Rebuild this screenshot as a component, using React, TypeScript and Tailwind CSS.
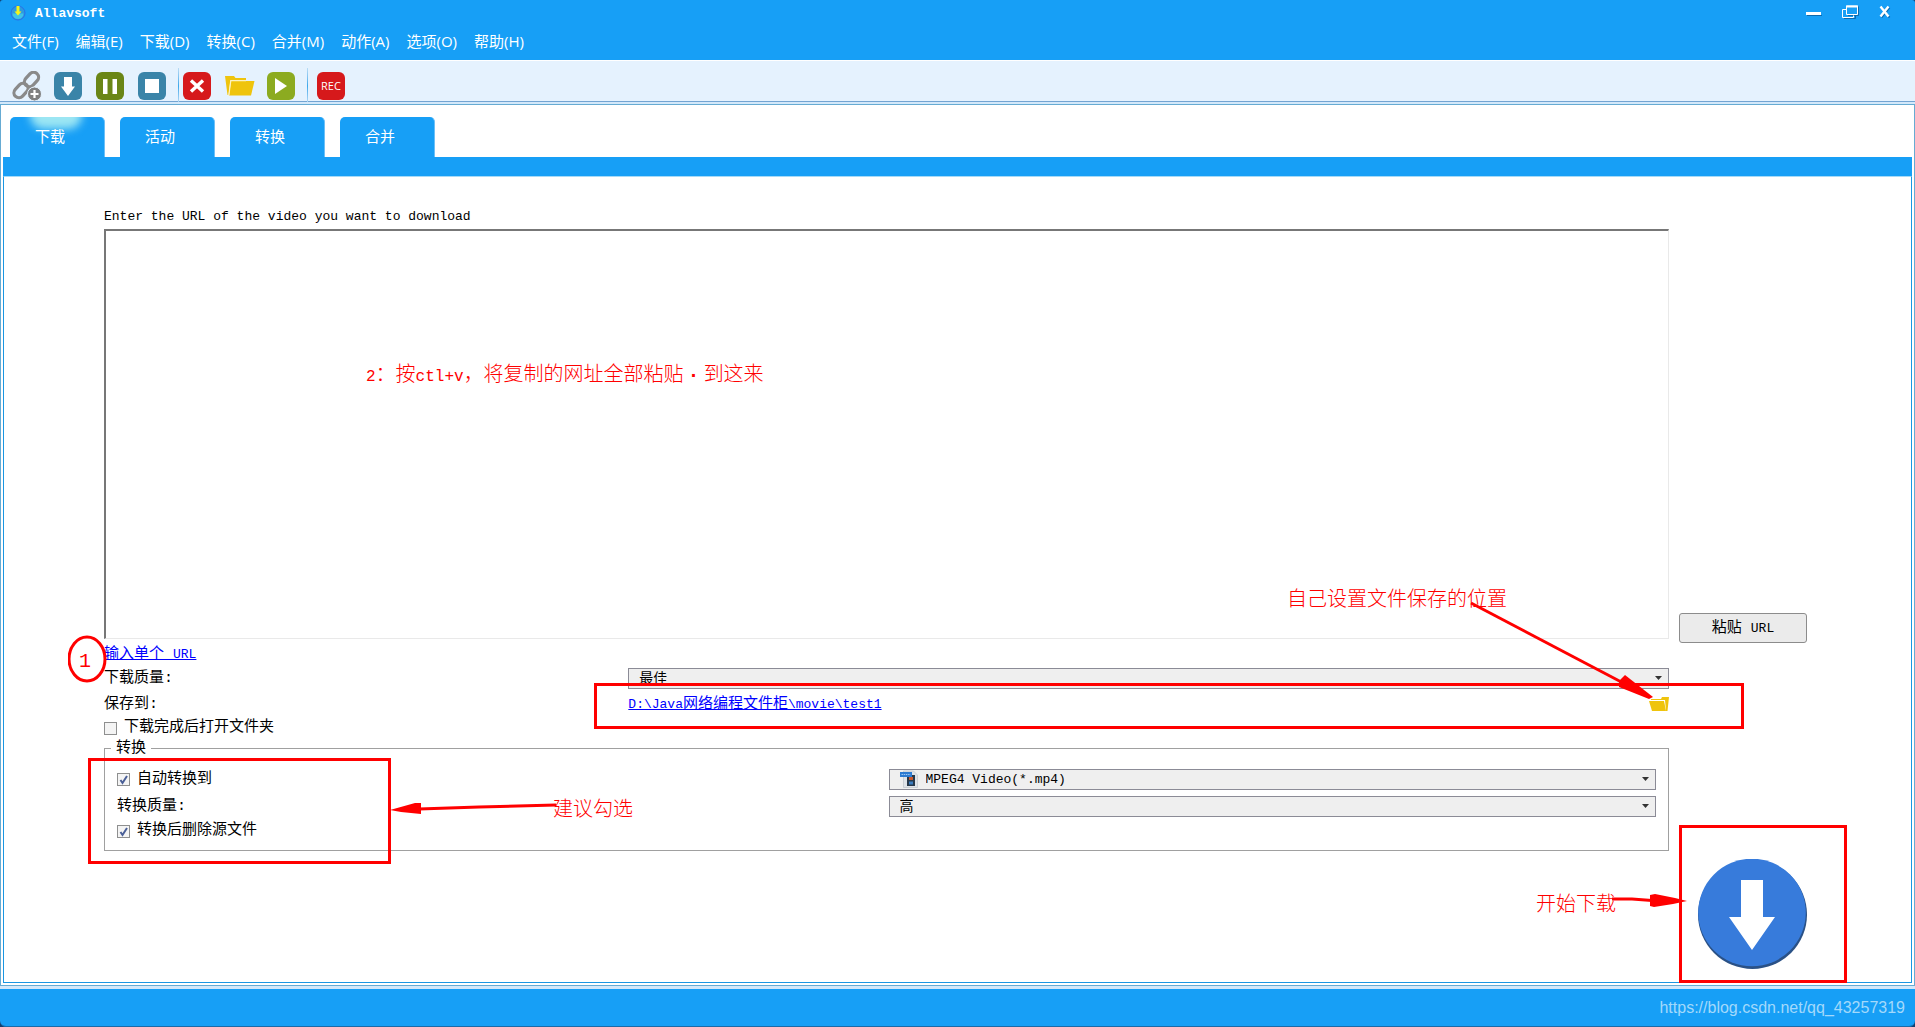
import React, { useState } from "react";

const MENU = ["文件(F)", "编辑(E)", "下载(D)", "转换(C)", "合并(M)", "动作(A)", "选项(O)", "帮助(H)"];
const TABS = ["下载", "活动", "转换", "合并"];

function AppIcon() {
  return (
    <svg width="16" height="16" viewBox="0 0 16 16" aria-hidden="true">
      <circle cx="8" cy="8" r="7" fill="#2c9be0" stroke="#2a6fe8" />
      <path d="M2.5 8.5a5.5 5.5 0 0 0 11 0z" fill="#3fc3e8" />
      <path d="M6.5 1h3v5.500h2L8 10.500 4.500 6.500h2z" fill="#f4f41c" />
    </svg>
  );
}

function LinkAddIcon() {
  return (
    <svg width="30" height="30" viewBox="0 0 30 30" fill="none" aria-hidden="true">
      <g stroke="#8a8a8a" strokeWidth="3.200">
        <rect x="-8" y="-5" width="16" height="10" rx="5" transform="translate(19.500 8.500) rotate(-47)" />
        <rect x="-8" y="-5" width="16" height="10" rx="5" transform="translate(9 19.500) rotate(-47)" />
      </g>
      <circle cx="22.500" cy="23" r="7" fill="#808080" stroke="#e5f2fe" />
      <path d="M22.500 19v8M18.500 23h8" stroke="#fff" strokeWidth="2.2" />
    </svg>
  );
}

function FolderIcon() {
  return (
    <svg width="30" height="22" viewBox="0 0 30 22" aria-hidden="true">
      <path d="M0 1h9l1.500 2H21v2H5.500L3.500 20H2.500z" fill="#efc40d" />
      <path d="M6 6h23.500L26 20.500H4z" fill="#efc40d" />
      <path d="M3.800 20.500L5.800 5.700H21" fill="none" stroke="#fdf3c2" strokeWidth="1.200" />
    </svg>
  );
}

function SmallFolderIcon() {
  return (
    <svg width="20" height="15" viewBox="0 0 20 15" aria-hidden="true">
      <path d="M13 0h7l-1.500 14H17L16 3H2V2h10z" fill="#efc40d" />
      <path d="M0 4h15l2 10H3z" fill="#efc40d" />
    </svg>
  );
}

function Mp4Icon() {
  return (
    <svg width="18" height="18" viewBox="0 0 18 18" aria-hidden="true">
      <path d="M3.500 1h10l4 4v12.500h-14z" fill="#dfe3e8" stroke="#c3c8ce" strokeWidth=".8" />
      <path d="M7 5h8v11H7z" fill="#26384a" />
      <path d="M9 7h4v3H9z" fill="#c8592e" />
      <path d="M9 11.500h4v3H9z" fill="#3a7cc0" />
      <path d="M0 2h12v5H0z" fill="#2d7bd2" />
      <path d="M1.500 4.500h9" stroke="#9cc6f2" strokeDasharray="1.500 .7" />
    </svg>
  );
}

function ToolButton({ label, className, children }: { label: string; className: string; children: React.ReactNode }) {
  return (
    <button
      type="button"
      aria-label={label}
      className={`flex size-7 items-center justify-center rounded-md ${className}`}
    >
      {children}
    </button>
  );
}

function Divider() {
  return <span className="h-9 w-px bg-linear-to-b from-[#b9dcf5] via-[#3aa8ea] to-[#b9dcf5]" />;
}

function Combo({ id, value, label, icon }: { id: string; value: string; label?: string; icon?: React.ReactNode }) {
  return (
    <div className="relative h-[21px]">
      {icon && <span className="absolute left-[11px] top-px">{icon}</span>}
      <select
        id={id}
        aria-label={label}
        className={`block h-full w-full appearance-none border border-[#8b8b96] bg-[#efefef] ${
          icon ? "pl-9 text-[13px]" : "pl-2.5 text-sm"
        }`}
      >
        <option>{value}</option>
      </select>
      <svg className="pointer-events-none absolute right-[7px] top-2" width="7" height="4" viewBox="0 0 7 4" aria-hidden="true">
        <path d="M0 0h7L3.500 4z" fill="#333" />
      </svg>
    </div>
  );
}

function CheckRow({ id, label, checked = false }: { id: string; label: string; checked?: boolean }) {
  const [on, setOn] = useState(checked);
  return (
    <div className="flex items-center">
      <span className="relative size-[13px]">
        <input
          id={id}
          type="checkbox"
          checked={on}
          onChange={() => setOn(!on)}
          className="block size-[13px] appearance-none border border-[#8e8f8f] bg-[#f4f4f4]"
        />
        {on && (
          <svg className="pointer-events-none absolute left-0 top-0" width="13" height="13" viewBox="0 0 13 13" aria-hidden="true">
            <path d="M3.500 7l2 3L10 3" fill="none" stroke="#4a5f97" strokeWidth="2" />
          </svg>
        )}
      </span>
      <label htmlFor={id} className="pl-[7px]">
        {label}
      </label>
    </div>
  );
}

// red handwritten-style hints that lie over the form
const NOTE = "pointer-events-none absolute whitespace-nowrap text-xl leading-6 font-light text-[#ff0000]";
const FRAME = "pointer-events-none absolute border-3 border-[#ff0000]";

export default function App() {
  const [tab, setTab] = useState(0);

  return (
    <div className="flex min-h-screen flex-col bg-[#123f70] font-['Liberation_Mono','Noto_Sans_CJK_SC',monospace] text-[15px] leading-5 text-black">
      {/* Title bar and menu */}
      <header className="rounded-t-[3px] bg-[#179ff6] text-white">
        <div className="flex h-[25px] items-center justify-between pl-[10px] pr-6">
          <div className="flex items-center gap-[9px]">
            <AppIcon />
            <h1 className="pt-0.5 text-[13px] font-bold">Allavsoft</h1>
          </div>
          <div className="flex items-center gap-5 pb-0.5">
            <button type="button" aria-label="最小化">
              <svg width="16" height="14" viewBox="0 0 16 14" aria-hidden="true">
                <path d="M0 8.500h15" stroke="#fff" strokeWidth="3" />
                <path d="M1 10.500h15" stroke="#0c69ad" />
              </svg>
            </button>
            <button type="button" aria-label="还原">
              <svg width="17" height="14" viewBox="0 0 17 14" fill="none" aria-hidden="true">
                <path d="M2 13.500h11.500v-3M6 10.500h10.500v-9" stroke="#0c69ad" />
                <path d="M4 4.500H.500v8h11v-2" stroke="#fff" />
                <path d="M4.500 1h11v8.500h-11z" stroke="#fff" />
                <path d="M4 1.500h12" stroke="#fff" strokeWidth="2" />
              </svg>
            </button>
            <button type="button" aria-label="关闭">
              <svg width="12" height="14" viewBox="0 0 12 14" fill="none" aria-hidden="true">
                <path d="M2.500 2.500l8 10M10.500 2.500l-8 10" stroke="#0c69ad" strokeWidth="2" />
                <path d="M1.500 1.500l8 10M9.500 1.500l-8 10" stroke="#fff" strokeWidth="2.4" />
              </svg>
            </button>
          </div>
        </div>
        <nav className="flex h-[35px] items-center gap-[17px] px-3 pb-1 font-['Open_Sans','Noto_Sans_CJK_SC',sans-serif]">
          {MENU.map((item) => (
            <button key={item} type="button">
              {item}
            </button>
          ))}
        </nav>
      </header>

      {/* Toolbar */}
      <div className="flex h-[42px] items-center border-b border-t border-b-[#73a4d2] border-t-white bg-[#e5f2fe] pl-3 pt-[10px]">
        <button type="button" aria-label="添加链接" className="w-[42px]">
          <LinkAddIcon />
        </button>
        <div className="flex items-center gap-[14px]">
          <ToolButton label="开始" className="bg-[#3a84a8]">
            <svg width="14" height="19" viewBox="0 0 14 19" aria-hidden="true">
              <path d="M3 0h8v9.500h3L7 19 0 9.500h3z" fill="#fff" />
            </svg>
          </ToolButton>
          <ToolButton label="暂停" className="bg-[#6a8616]">
            <svg width="14" height="15" viewBox="0 0 14 15" aria-hidden="true">
              <path d="M0 0h4.500v15H0zM9.500 0H14v15H9.500z" fill="#fff" />
            </svg>
          </ToolButton>
          <ToolButton label="停止" className="bg-[#3a84a8]">
            <span className="size-[14px] bg-white" />
          </ToolButton>
        </div>
        <div className="flex items-center gap-1 pl-3">
          <Divider />
          <ToolButton label="删除" className="bg-[#d6191b]">
            <svg width="16" height="14" viewBox="0 0 16 14" aria-hidden="true">
              <path d="M2 1.500l12 11M14 1.500l-12 11" stroke="#fff" strokeWidth="3.400" />
            </svg>
          </ToolButton>
        </div>
        <button type="button" aria-label="打开文件夹" className="pl-[14px] pr-3">
          <FolderIcon />
        </button>
        <ToolButton label="播放" className="bg-[#8cab20]">
          <svg width="12" height="16" viewBox="0 0 12 16" aria-hidden="true">
            <path d="M0 0l12 8-12 8z" fill="#fff" />
          </svg>
        </ToolButton>
        <div className="flex items-center gap-[9px] pl-3">
          <Divider />
          <ToolButton label="录制" className="bg-[#d6191b] font-['Open_Sans',sans-serif] text-[11px] text-white">
            REC
          </ToolButton>
        </div>
      </div>

      {/* Main window area */}
      <div className="flex flex-1 flex-col bg-[#d3e8fa] pb-[3px] pt-[2px]">
        <div className="flex flex-1 flex-col border border-[#66abd3] bg-white px-[2px] pb-[2px] pt-3">
          <div role="tablist" className="flex gap-[15px] px-[7px] text-white">
            {TABS.map((name, i) => (
              <button
                key={name}
                type="button"
                role="tab"
                aria-selected={tab === i}
                onClick={() => setTab(i)}
                className="relative h-10 w-[95px] overflow-hidden rounded-t-[5px] border-r border-[#6cc0f8] bg-[#179ff6] pl-[25px] pt-1 text-left"
              >
                {tab === i && <span className="absolute -top-4 left-5 h-7 w-[52px] rounded-full bg-[#9ce6f3] blur-[4px]" />}
                <span className="relative">{name}</span>
              </button>
            ))}
          </div>
          <div className="h-[19px] bg-[#179ff6]" />

          <main className="flex flex-1 border border-t border-[#1a96e2] border-t-[#a5daf8] pl-[100px] pr-[104px] pt-[30px]">
            <section className="relative flex flex-1 flex-col pb-[131px]">
              <label htmlFor="urls" className="text-[13px]">
                Enter the URL of the video you want to download
              </label>
              <textarea
                id="urls"
                className="mt-[2px] min-h-40 w-full flex-1 resize-none border border-l-2 border-t-2 border-[#e9e9e9] border-l-[#777] border-t-[#777] bg-white p-1 outline-none"
              />

              <div className="relative flex h-7 items-center pt-1">
                <a href="#single" className="text-[#0000ff] underline">
                  输入单个 <span className="text-[13px]">URL</span>
                </a>
                <svg className="pointer-events-none absolute -left-9 top-[-4px]" width="40" height="50" viewBox="0 0 40 50" fill="none" aria-hidden="true">
                  <ellipse cx="19" cy="24" rx="18" ry="22" stroke="#f00" strokeWidth="3" />
                </svg>
                <span className={`${NOTE} -left-[25px] top-[11px]`}>1</span>
              </div>

              <div className="grid h-[21px] grid-cols-[1fr_2fr] items-center gap-1">
                <label htmlFor="quality" className="pt-0.5">
                  下载质量:
                </label>
                <Combo id="quality" value="最佳" />
              </div>

              <div className="relative grid h-[29px] grid-cols-[1fr_2fr] items-center gap-1 pt-1">
                <span>保存到:</span>
                <div className="flex items-center justify-between">
                  <a href="#folder" className="text-[#0000ff] underline">
                    <span className="text-[13px]">D:\Java</span>网络编程文件柜
                    <span className="text-[13px]">\movie\test1</span>
                  </a>
                  <button type="button" aria-label="选择文件夹">
                    <SmallFolderIcon />
                  </button>
                </div>
                <div className={`${FRAME} -right-[75px] -top-[5px] left-[calc((100%-4px)/3-30px)] h-[46px]`} />
                <svg className="pointer-events-none absolute right-4 top-[-88px]" width="184" height="100" viewBox="0 0 184 100" aria-hidden="true">
                  <path d="M2 3l156 82" stroke="#f00" strokeWidth="3" />
                  <path d="M150 87v-6l6-6 28 22-4 2z" fill="#f00" />
                </svg>
                <p className={`${NOTE} right-[162px] top-[-99px]`}>自己设置文件保存的位置</p>
              </div>

              <div className="flex h-[22px] items-center">
                <CheckRow id="open-folder" label="下载完成后打开文件夹" />
              </div>

              <fieldset className="relative border border-[#a0a0a0] px-3 pb-[11px]">
                <legend className="-ml-[6px] h-[18px] px-[5px]">转换</legend>
                <div className="grid gap-1.5 pt-3">
                  <div className="grid h-[21px] grid-cols-2 items-center gap-1">
                    <CheckRow id="auto-convert" label="自动转换到" checked />
                    <Combo id="format" label="格式" value="MPEG4 Video(*.mp4)" icon={<Mp4Icon />} />
                  </div>
                  <div className="grid h-[21px] grid-cols-2 items-center gap-1">
                    <label htmlFor="convert-quality">转换质量:</label>
                    <Combo id="convert-quality" value="高" />
                  </div>
                  <div className="flex h-4 items-center">
                    <CheckRow id="delete-source" label="转换后删除源文件" checked />
                  </div>
                </div>
                <div className={`${FRAME} -bottom-[14px] -left-[17px] h-[106px] w-[303px]`} />
                <svg className="pointer-events-none absolute bottom-[30px] left-[284px]" width="168" height="20" viewBox="0 0 168 20" aria-hidden="true">
                  <path d="M30 9l60-2 77-2" fill="none" stroke="#f00" strokeWidth="3" />
                  <path d="M1 10l25-7h6v11L12 12z" fill="#f00" />
                </svg>
                <p className={`${NOTE} bottom-[27px] left-[448px]`}>建议勾选</p>
              </fieldset>

              <p className={`${NOTE} left-[262px] top-[157px]`}>
                <span className="text-base">2</span>：按<span className="text-base">ctl+v</span>，将复制的网址全部粘贴
                <span className="inline-block w-5 text-center font-bold">·</span>到这来
              </p>
            </section>

            {/* Right side actions */}
            <aside className="relative ml-[10px] flex w-32 flex-col justify-end pb-[13px]">
              <button
                type="button"
                className="mb-[216px] h-[30px] rounded-[3px] border border-[#8c8c8c] bg-[#ebebeb] pt-0.5"
              >
                粘贴 <span className="text-[13px]">URL</span>
              </button>
              <button type="button" aria-label="开始下载" className="ml-[18px] size-[110px]">
                <svg width="110" height="110" viewBox="0 0 110 110" aria-hidden="true">
                  <circle cx="55.500" cy="55.500" r="54.500" fill="#2a5186" />
                  <circle cx="55" cy="53.500" r="53.800" fill="#377bdb" />
                  <path d="M44 21h22v37h12L55 91 32 58h12z" fill="#fff" />
                </svg>
              </button>
              <div className={`${FRAME} -bottom-px -right-10 left-0 h-[158px]`} />
              <svg className="pointer-events-none absolute -left-[67px] bottom-[73px]" width="75" height="16" viewBox="0 0 75 16" aria-hidden="true">
                <path d="M0 6h20l20 1.500" fill="none" stroke="#f00" strokeWidth="3" />
                <path d="M38 2l5-1 20 4 12 3-14 3-19 3-4-1z" fill="#f00" />
              </svg>
              <p className={`${NOTE} -left-[143px] bottom-16`}>开始下载</p>
            </aside>
          </main>
        </div>
      </div>

      <footer className="flex h-[38px] items-center justify-end rounded-b-md border-b border-[#1b6aa8] bg-[#179ff6] pr-[10px] font-['Liberation_Sans',sans-serif] text-base text-[#a3d9fb]">
        https://blog.csdn.net/qq_43257319
      </footer>
    </div>
  );
}
